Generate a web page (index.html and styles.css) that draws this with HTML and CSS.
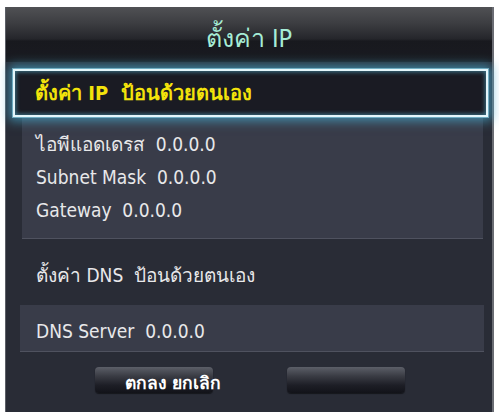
FILE: index.html
```html
<!DOCTYPE html>
<html lang="th">
<head>
<meta charset="utf-8">
<title>ตั้งค่า IP</title>
<link rel="stylesheet" href="styles.css">
</head>
<body>
<div class="panel">
  <div class="titlebar"><h1 class="title">ตั้งค่า IP</h1></div>
  <div class="focus"><span class="focus-text">ตั้งค่า IP&nbsp; ป้อนด้วยตนเอง</span></div>
  <div class="group">
    <div class="row">ไอพีแอดเดรส&nbsp; 0.0.0.0</div>
    <div class="row">Subnet Mask&nbsp; 0.0.0.0</div>
    <div class="row">Gateway&nbsp; 0.0.0.0</div>
  </div>
  <div class="label-row">ตั้งค่า DNS&nbsp; ป้อนด้วยตนเอง</div>
  <div class="group dns">
    <div class="row">DNS Server&nbsp; 0.0.0.0</div>
  </div>
  <div class="buttons">
    <div class="btn"><span class="btn-text">ตกลง ยกเลิก</span></div>
    <div class="btn"></div>
  </div>
</div>
</body>
</html>
```

FILE: styles.css
```css
* { box-sizing: border-box; }
html, body {
  margin: 0;
  padding: 0;
  background: #ffffff;
}
body {
  width: 499px;
  height: 412px;
  overflow: hidden;
  font-family: "DejaVu Sans Condensed", "DejaVu Sans", "Noto Sans", sans-serif;
  font-stretch: condensed;
}
.panel {
  margin: 7px 5px 0 5px;
  width: 489px;
  height: 405px;
  background: #292c36;
  border-left: 1px solid #5b5e66;
  border-right: 2px solid #6a6c73;
}
.titlebar {
  height: 55px;
  padding-top: 8px;
  background: linear-gradient(#505154 0%, #3c3d41 30%, #25262b 58%, #18191e 62%, #1a1b21 100%);
}
.title {
  margin: 0;
  font-size: 25px;
  font-weight: normal;
  line-height: 48px;
  text-align: center;
  color: #a6ecd6;
}
.focus {
  margin: 7px 0 0 7px;
  width: 475px;
  height: 48px;
  border: 2px solid #e4f6fb;
  background: #1a1b23;
  padding-left: 20px;
  box-shadow: 0 0 0 1px rgba(160, 225, 245, 0.55), 0 0 10px 4px rgba(70, 170, 205, 0.7), inset 0 0 4px 1px rgba(90, 190, 220, 0.55);
  position: relative;
  z-index: 1;
}
.focus-text {
  display: block;
  font-size: 20px;
  font-weight: bold;
  line-height: 44px;
  color: #f3e30b;
  white-space: nowrap;
}
.group {
  margin: 1px 0 0 16px;
  width: 461px;
  padding: 10px 0 11px 14px;
  background: #393c49;
  border-bottom: 1px solid #4f525f;
}
.row {
  font-size: 19px;
  line-height: 33px;
  height: 33px;
  color: #e8e8ea;
  white-space: nowrap;
}
.label-row {
  margin-top: 20px;
  padding-left: 30px;
  font-size: 19px;
  line-height: 33px;
  height: 33px;
  color: #e8e8ea;
  white-space: nowrap;
}
.dns {
  margin: 13px 0 0 14px;
  width: 464px;
  height: 47px;
  padding: 10px 0 0 16px;
}
.buttons {
  display: flex;
  gap: 74px;
  margin-top: 15px;
  padding-left: 89px;
}
.btn {
  width: 118px;
  height: 26px;
  border-radius: 4px;
  padding: 3px 0 0 30px;
  background: linear-gradient(#5c5f68 0%, #3a3c44 35%, #1d1e26 70%, #121319 100%);
  box-shadow: 0 1px 1px rgba(0, 0, 0, 0.5);
}
.btn-text {
  display: block;
  font-size: 17.5px;
  font-weight: bold;
  line-height: 26px;
  color: #ffffff;
  white-space: nowrap;
}
```
